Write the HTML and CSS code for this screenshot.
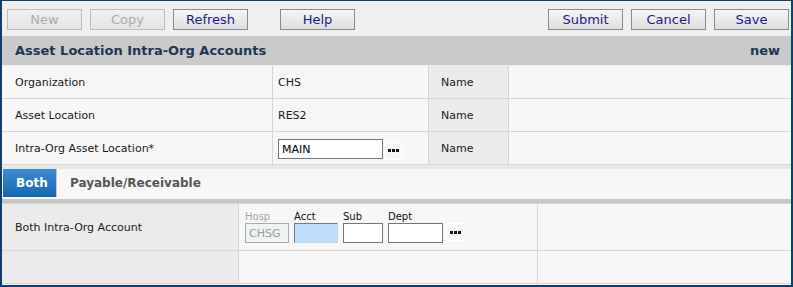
FILE: index.html
```html
<!DOCTYPE html>
<html lang="en">
<head>
    <meta charset="UTF-8">
    <title>Asset Location Intra-Org Accounts</title>
    <link rel="stylesheet" href="styles.css">
</head>
<body>

    <div class="window">
        <div class="toolbar">
            <div class="btn-group">
                <button class="btn" disabled>New</button>
                <button class="btn" disabled>Copy</button>
                <button class="btn">Refresh</button>
                <button class="btn help">Help</button>
            </div>
            <div class="btn-group">
                <button class="btn">Submit</button>
                <button class="btn">Cancel</button>
                <button class="btn">Save</button>
            </div>
        </div>

        <div class="title-bar">
            <span>Asset Location Intra-Org Accounts</span>
            <span>new</span>
        </div>

        <div class="form-grid">
            <div class="cell label">Organization</div>
            <div class="cell value">CHS</div>
            <div class="cell name">Name</div>
            <div class="cell"></div>

            <div class="cell label">Asset Location</div>
            <div class="cell value">RES2</div>
            <div class="cell name">Name</div>
            <div class="cell"></div>

            <div class="cell label">Intra-Org Asset Location*</div>
            <div class="cell value">
                <input type="text" class="field main-field" value="MAIN">
                <span class="lookup"><i></i><i></i><i></i></span>
            </div>
            <div class="cell name">Name</div>
            <div class="cell"></div>
        </div>

        <div class="spacer"></div>

        <div class="tabs">
            <div class="tab active">Both</div>
            <div class="tab">Payable/Receivable</div>
        </div>

        <div class="account-grid">
            <div class="cell label dark">Both Intra-Org Account</div>
            <div class="cell segments">
                <div class="segment">
                    <label class="muted">Hosp</label>
                    <input type="text" class="field hosp" value="CHSG" disabled>
                </div>
                <div class="segment">
                    <label>Acct</label>
                    <input type="text" class="field acct">
                </div>
                <div class="segment">
                    <label>Sub</label>
                    <input type="text" class="field sub">
                </div>
                <div class="segment">
                    <label>Dept</label>
                    <input type="text" class="field dept">
                </div>
                <span class="lookup seg-lookup"><i></i><i></i><i></i></span>
            </div>
            <div class="cell"></div>

            <div class="cell label dark short"></div>
            <div class="cell short"></div>
            <div class="cell short"></div>
        </div>
    </div>

</body>
</html>
```

FILE: styles.css
```css
/* Global */
body {
    margin: 0;
    font-family: 'DejaVu Sans', Verdana, sans-serif;
    font-size: 11px;
    color: #1a1a1a;
    background: #fff;
}

.window {
    width: 793px;
    height: 287px;
    box-sizing: border-box;
    border: 2px solid #0e3f72;
    border-top-width: 1px;
    background: #f7f7f7;
    overflow: hidden;
}

/* Toolbar */
.toolbar {
    height: 35px;
    background: #efefef;
    display: flex;
    justify-content: space-between;
    padding: 8px 2px 0 5px;
    box-sizing: border-box;
}

.btn-group {
    display: flex;
    gap: 8px;
    align-items: flex-start;
}

.btn {
    width: 75px;
    height: 21px;
    padding: 0;
    font-family: 'DejaVu Sans', Verdana, sans-serif;
    font-size: 13px;
    color: #211a8a;
    border: 1px solid #8a8a8a;
    border-radius: 0;
    background: linear-gradient(#f6f6f6, #dedede);
    line-height: 18px;
}

.btn:disabled {
    color: #acacac;
    border-color: #bdbdbd;
    background: linear-gradient(#f0f0f0, #e4e4e4);
}

.btn.help {
    margin-left: 24px;
}

/* Title */
.title-bar {
    height: 29px;
    background: #c9cac9;
    color: #1e3656;
    font-weight: bold;
    font-size: 13px;
    display: flex;
    justify-content: space-between;
    align-items: center;
    padding: 0 11px 0 13px;
    border-bottom: 1px solid #ececec;
}

/* Form rows */
.form-grid {
    display: grid;
    grid-template-columns: 270px 155px 79px 1fr;
    grid-auto-rows: 32px;
    row-gap: 1px;
    column-gap: 1px;
    background: #d6d6d6;
    border-bottom: 1px solid #d6d6d6;
}

.cell {
    background: #f7f7f7;
    display: flex;
    align-items: center;
}

.form-grid .cell {
    padding-top: 1px;
    box-sizing: border-box;
}

.label {
    padding-left: 13px;
}

.value {
    padding-left: 5px;
}

.name {
    background: #ebebeb;
    padding-left: 12px;
}

.field {
    box-sizing: border-box;
    font-family: 'DejaVu Sans', Verdana, sans-serif;
    font-size: 11px;
    border: 1px solid #767676;
    background: #fff;
    padding: 0 3px;
    margin: 0;
    border-radius: 0;
    outline: none;
}

.main-field {
    width: 105px;
    height: 20px;
    margin-top: 1px;
}

.lookup {
    width: 18px;
    height: 18px;
    box-sizing: border-box;
    border: 1px solid #fff;
    display: inline-flex;
    align-items: center;
    justify-content: center;
    gap: 1px;
    margin-left: 1px;
    margin-top: 4px;
}

.lookup i {
    width: 3px;
    height: 3px;
    background: #222;
    box-shadow: inset 0 0 0 1px #111;
}

.spacer {
    height: 4px;
    background: #e8e8e8;
}

/* Tabs */
.tabs {
    height: 30px;
    display: flex;
    background: #f7f7f7;
    border-bottom: 4px solid #c6c6c6;
    box-sizing: content-box;
    padding-left: 1px;
}

.tab {
    font-weight: bold;
    font-size: 12px;
    color: #555;
    display: flex;
    align-items: center;
    padding: 0 13px;
    height: 28px;
}

.tab.active {
    width: 54px;
    box-sizing: border-box;
    background: linear-gradient(#3e8cd1, #1467b2);
    color: #fff;
    border-right: 1px solid #c5c5c5;
}

/* Account section */
.account-grid {
    display: grid;
    grid-template-columns: 236px 298px 1fr;
    grid-template-rows: 46px 32px;
    gap: 1px;
    background: #d6d6d6;
    border-top: 1px solid #d6d6d6;
    border-bottom: 1px solid #d6d6d6;
}

.dark {
    background: #ebebeb;
}

.segments {
    padding-left: 6px;
    align-items: flex-start;
    padding-top: 7px;
    gap: 5px;
}

.segment {
    display: flex;
    flex-direction: column;
}

.segment label {
    font-size: 10px;
    line-height: 12px;
    color: #111;
}

.segment label.muted {
    color: #a5a5a5;
}

.segment .field {
    height: 20px;
    margin-top: 0;
}

.hosp {
    width: 44px;
    background: #eef4f4;
    color: #9a9a9a;
    border-color: #ababab;
    font-size: 11px;
}

.acct {
    width: 44px;
    background: #bfdcfb;
    border-color: #7a7a7a #bcd8f5 #bcd8f5 #7a7a7a;
}

.sub {
    width: 40px;
}

.dept {
    width: 55px;
}

.seg-lookup {
    margin-left: -2px;
    margin-top: 12px;
}
```
